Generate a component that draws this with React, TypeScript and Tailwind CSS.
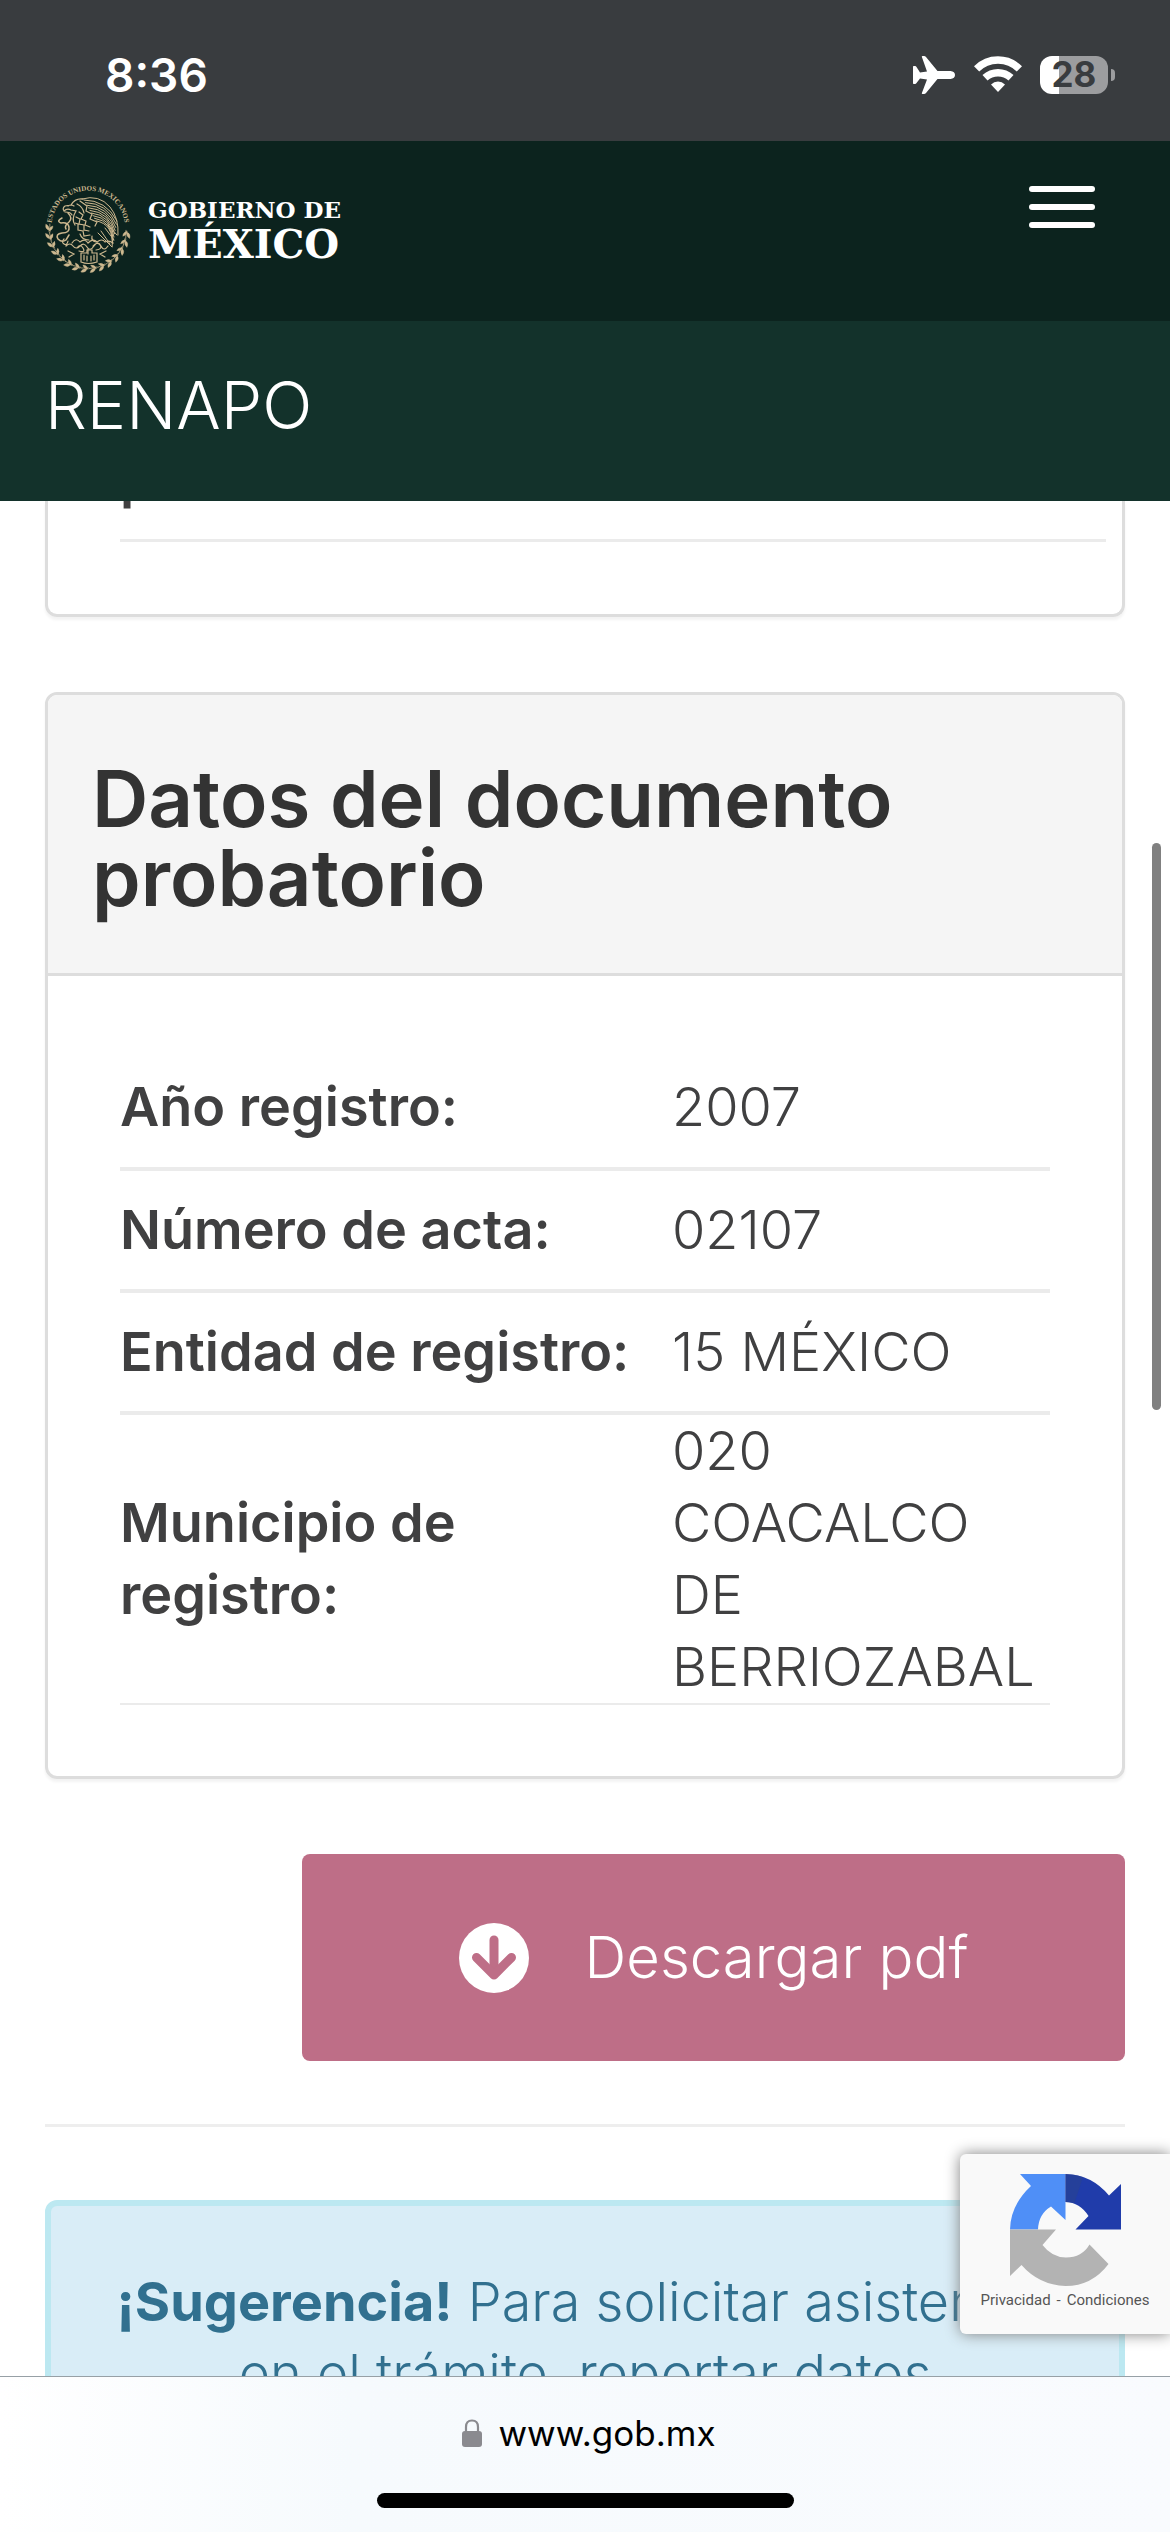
import type { ReactNode } from "react";

const records = [
  { label: "Año registro:", value: "2007" },
  { label: "Número de acta:", value: "02107" },
  { label: "Entidad de registro:", value: "15 MÉXICO" },
  { label: "Municipio de registro:", value: "020 COACALCO DE BERRIOZABAL" },
];

const laurel = Array.from({ length: 15 }, (_, i) => 2 + i * 12.6);
const feathers = Array.from({ length: 9 }, (_, i) => i);

const PlaneIcon = () => (
  <svg className="w-[43px] h-[38px]" viewBox="0 0 43 38" fill="#fff" aria-hidden="true">
    <path d="M37.500 15H24.500L13 1q-.8-1-2-1H9.500q-1 0-.6 1l5.100 14.600-7 1L3.500 11Q3 10 2 10H.6Q0 10 0 11v16q0 1 .6 1H2q1 0 1.500-1l3.500-4.600 7 1L8.900 37q-.4 1 .6 1H11q1.200 0 2-1l11.500-14h13q4.500-.5 4.500-4t-4.500-4z" />
  </svg>
);

const WifiIcon = () => (
  <svg className="w-12 h-[37px]" viewBox="0 0 48 37" aria-hidden="true">
    <g fill="none" stroke="#fff" strokeWidth="7.400">
      <path d="M2.600 12.900Q11.500 4 24 4t21.400 8.900" />
      <path d="M11 21.800Q16.500 16.700 24 16.700t13 5.100" />
    </g>
    <path d="M24 25.500q4 0 7 3L24 36l-7-7.500q3-3 7-3z" fill="#fff" />
  </svg>
);

const BatteryIcon = () => (
  <div className="flex items-center gap-[3px]">
    <div className="flex h-[38px] w-[68px] items-center justify-center rounded-xl bg-gradient-to-r from-white from-28% to-[#9c9d9f] to-28% font-['Inter'] text-[35px] font-bold leading-none text-[#393c3f]">
      28
    </div>
    <div className="h-3 w-1 rounded-r-full bg-[#9c9d9f]" />
  </div>
);

const Emblem = () => (
  <svg className="w-[88px] h-[88px]" viewBox="0 0 88 88" fill="none" stroke="#cdb88f" strokeLinecap="round" aria-hidden="true">
    <defs>
      <path id="ring" d="M7.500 46A36.800 36.800 0 1 1 80.500 46" />
    </defs>
    <text fill="#cdb88f" stroke="none" fontSize="7" className="font-['Liberation_Serif']">
      <textPath href="#ring" startOffset="50%" textAnchor="middle">ESTADOS UNIDOS MEXICANOS</textPath>
    </text>
    {/* Laurel and oak wreath */}
    {laurel.map((deg) => (
      <g key={deg} transform={`rotate(${deg} 44 44)`}>
        <path d="M83 44q-4 1-4 5 4-1 4-5zM83 45q4 1 3 6-4-2-3-6z" fill="#cdb88f" strokeWidth=".4" />
        <path d="M82 43v8" strokeWidth=".7" />
      </g>
    ))}
    {/* Wing */}
    <g strokeWidth="1">
      {feathers.map((i) => (
        <path key={i} d={`M${40 + i * 1.5} ${14 + i * 2.6}Q${62 + i} ${14 + i * 3} ${73 - i * 0.6} ${35 + i * 3.2}`} />
      ))}
      <path d="M38 13q17-5 28 8 9 11 8 28M68 61l-14-14M66 58l-9-13M70 54l-9-12M73 49l-9-10" />
    </g>
    {/* Head, neck and body */}
    <g strokeWidth="1.200">
      <path d="M39 13q-8-1-12 6l-6 1q-3 2-1 5 3-3 7-1l5 1q-5 8-1 14M24 20q3-2 6 0M21 26q6 0 7 3" />
      <path d="M33 18q6 3 7 9M35 26l4 3-2 4 5 2-1 4 5 2M32 31l4 2-1 5 5 1v5l5 1M31 37l3 1v6l5 1 1 5 6-1M36 15l7 5-1 5 6 3-2 5 7 3-2 4" />
      <path d="M36 48q2 6 9 6M48 50q-1 5 4 6" />
    </g>
    {/* Serpent */}
    <path d="M18 32q-6 3-1 5 7-1 8 4 1 6-7 6-7 1-4 6 4 4 8 1l3-5M24 27q5 5 1 9-5 4-3 7" strokeWidth="1.500" />
    {/* Nopal on its rock */}
    <g strokeWidth="1.200">
      <path d="M28 57q4-6 8-1 5-4 8 1 5-5 9-1 5-4 8 0 4-2 8 1M22 60q4-4 7 0t7 0 7 1 7-1 7 0 7 0M33 62q3-5 6 0t-4 3M49 60q4-5 7-1t-4 5M44 63v5M20 53q-3 3 0 5t4-3M24 65l6 3-5 3M62 65l-6 3 5 3" />
      <path d="M37 67v9q7 3 16 0v-9h-5v-3h-5v3zM40 69v5M43 70v5M47 70v5M50 69v5" />
    </g>
  </svg>
);

const DownloadIcon = () => (
  <svg className="w-[70px] h-[70px]" viewBox="0 0 70 70" aria-hidden="true">
    <circle cx="35" cy="35" r="35" fill="#fff" />
    <g fill="none" stroke="#be6e87" strokeWidth="9" strokeLinecap="round" strokeLinejoin="round">
      <path d="M35 17v32" />
      <path d="M17.500 34.500 35 52 52.500 34.500" />
    </g>
  </svg>
);

const RecaptchaIcon = () => (
  <svg className="w-[111px] h-[112px]" viewBox="0 0 111 112" aria-hidden="true">
    <path d="M55.500 0H10l11 12Q.5 31 0 55.500h28Q28.500 40 41 32.500L55.500 46z" fill="#4f8ff7" />
    <path d="M55.500 0q26 .5 43.500 21.500L111 10v45.500H65.500L78.500 42Q70 28.500 55.500 28z" fill="#203caa" />
    <path d="M55.500 0v28l9 1L73 3Q64 0 55.500 0z" fill="#2a4290" opacity=".6" />
    <path d="M0 55.500h46L32.500 71Q42 83.500 56 83.500q16 0 23.500-13L98.500 90Q82 112 55.500 112 29 111 11.500 91L0 102z" fill="#b3b3b3" />
  </svg>
);

const LockIcon = () => (
  <svg className="w-5 h-7" viewBox="0 0 20 28" aria-hidden="true">
    <path d="M4 13V8q0-6.500 6-6.500T16 8v5" fill="none" stroke="#8a8a8f" strokeWidth="2.200" />
    <rect y="12" width="20" height="16" rx="3" fill="#8a8a8f" />
  </svg>
);

const Card = ({ children, className = "" }: { children: ReactNode; className?: string }) => (
  <section className={`border-[#dddddd] border-x-3 border-b-3 shadow-[0_3px_3px_rgba(0,0,0,0.05)] ${className}`}>{children}</section>
);

const App = () => {
  return (
    <div className="relative flex h-screen flex-col overflow-hidden bg-white font-['Inter',sans-serif] text-[#404041]">
      {/* Status bar */}
      <div className="flex h-[141px] shrink-0 items-center justify-between bg-[#393c3f] pt-2 pr-[55px] pl-[105px] text-white">
        <span className="text-[46px] font-semibold leading-none">8:36</span>
        <div className="flex items-center gap-[18px]">
          <PlaneIcon />
          <WifiIcon />
          <BatteryIcon />
        </div>
      </div>

      {/* Site header */}
      <header className="shrink-0 text-white">
        <div className="flex h-[180px] items-start justify-between bg-[#0c231e] pt-[45px] pr-[75px] pl-11">
          <a href="#inicio" className="flex gap-4 font-['DejaVu_Serif'] font-bold">
            <Emblem />
            <span className="pt-2">
              <span className="block text-[23px] leading-8">GOBIERNO DE</span>
              <span className="block text-[40px] leading-9">MÉXICO</span>
            </span>
          </a>
          <button type="button" aria-label="Menú" className="flex w-[66px] flex-col gap-3">
            <span className="h-[6px] w-full rounded-sm bg-white" />
            <span className="h-[6px] w-full rounded-sm bg-white" />
            <span className="h-[6px] w-full rounded-sm bg-white" />
          </button>
        </div>
        <div className="flex h-[180px] items-center bg-[#13322b] px-[45px] pb-3">
          <a href="#renapo" className="text-[66px] font-light leading-none">RENAPO</a>
        </div>
      </header>

      {/* Page content */}
      <main className="flex min-h-0 flex-1 flex-col overflow-hidden px-[45px]">
        <Card className="shrink-0 rounded-b-xl pr-4 pb-[72px] pl-[72px]">
          {/* Last row of the previous table, scrolled under the header */}
          <div className="flex h-[41px] items-end overflow-hidden border-b-3 border-[#ebebeb]">
            <span className="pb-6 text-[54px] font-semibold leading-[72px]">p</span>
          </div>
        </Card>

        <Card className="mt-[75px] shrink-0 overflow-hidden rounded-xl border-t-3">
          <h2 className="border-b-3 border-[#dddddd] bg-[#f5f5f5] px-11 pt-[64px] pb-[56px] text-[78px] font-semibold leading-[79px] text-[#333333]">
            Datos del documento probatorio
          </h2>
          <div className="pt-[71px] pr-[72px] pb-[71px] pl-[72px]">
            <table className="w-full table-fixed border-collapse text-left text-[54px] leading-[72px]">
              <tbody>
                {records.map((row) => (
                  <tr key={row.label} className="h-[122px] border-b-4 border-[#ebebeb] last:border-b-2">
                    <th scope="row" className="w-[552px] py-0 pr-4 pl-0 font-semibold">{row.label}</th>
                    <td className="py-0 pr-3 pl-0 font-light">{row.value}</td>
                  </tr>
                ))}
              </tbody>
            </table>
          </div>
        </Card>

        <button
          type="button"
          className="mt-[75px] flex h-[207px] w-[823px] shrink-0 items-center justify-center gap-14 self-end rounded-lg bg-[#be6e87] text-[58px] font-light text-white"
        >
          <DownloadIcon />
          Descargar pdf
        </button>

        <hr className="mt-[63px] shrink-0 border-t-3 border-[#eeeeee]" />

        <div className="mt-[73px] h-[300px] shrink-0 rounded-xl border-6 border-[#bce8f1] bg-[#d9edf7] px-16 pt-[60px] text-center text-[54px] font-light leading-[72px] text-[#31708f]">
          <p className="whitespace-nowrap">
            <strong className="font-bold">¡Sugerencia!</strong> Para solicitar asistencia
          </p>
          <p>en el trámite, reportar datos</p>
        </div>
      </main>

      {/* Browser toolbar */}
      <footer className="flex h-[156px] shrink-0 flex-col items-center justify-between border-t border-[#97a0a6] bg-gradient-to-r from-white via-[#f6fafd] via-30% to-[#f9fbfe] pt-8 pb-6">
        <div className="flex items-center gap-4 pl-2 text-[35px] leading-[48px] text-black">
          <LockIcon />
          <span>www.gob.mx</span>
        </div>
        <div className="h-[15px] w-[417px] rounded-full bg-black" />
      </footer>

      {/* Scroll indicator */}
      <div className="absolute top-[843px] right-[9px] h-[567px] w-[9px] rounded-full bg-[#808080]" />

      {/* reCAPTCHA badge */}
      <aside className="absolute right-0 bottom-[198px] flex h-[180px] w-[210px] flex-col items-center gap-1 rounded-l-md bg-[#f9f9f9] pt-5 font-['Roboto'] text-[15px] leading-5 text-[#555555] shadow-[0_0_15px_#808080]">
        <RecaptchaIcon />
        <div className="flex gap-[6px]">
          <a href="#privacidad">Privacidad</a>
          <span>-</span>
          <a href="#condiciones">Condiciones</a>
        </div>
      </aside>
    </div>
  );
};

export default App;
